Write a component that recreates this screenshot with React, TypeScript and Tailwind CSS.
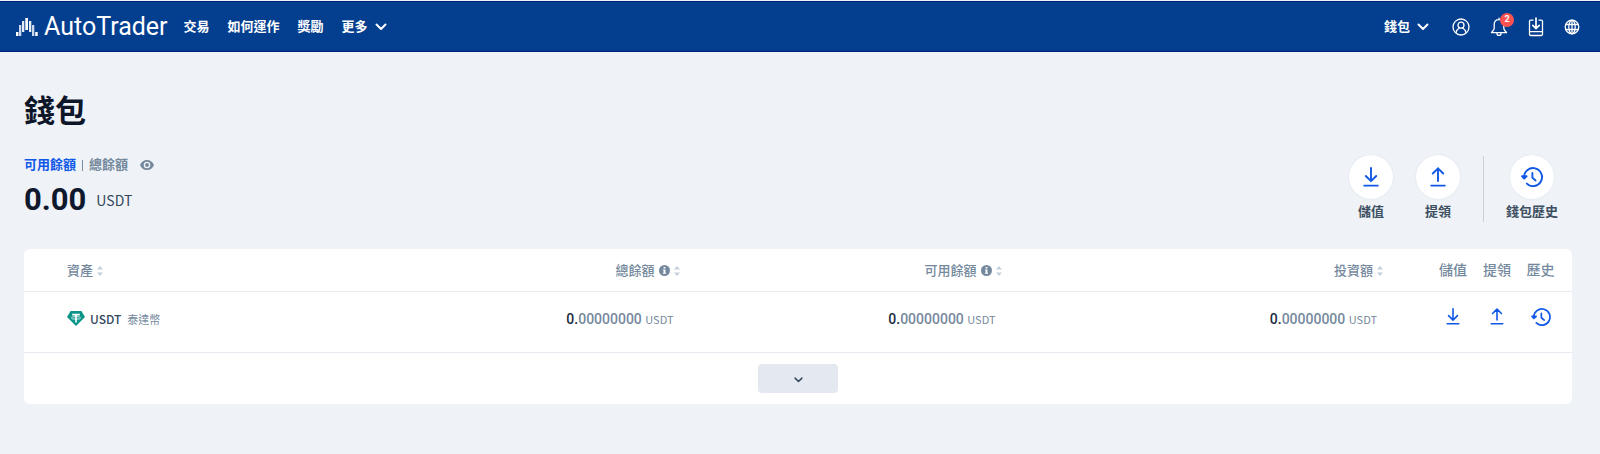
import type { ReactNode } from "react"
import { clsx } from "clsx"

interface IconProps {
  className?: string
}

const navLinks = ["交易", "如何運作", "獎勵"]

const balanceColumns: { id: string; label: string; info: boolean; pad: string; cellPad: string }[] = [
  { id: "total", label: "總餘額", info: true, pad: "pr-6", cellPad: "pr-[30px]" },
  { id: "available", label: "可用餘額", info: true, pad: "pr-6", cellPad: "pr-[30px]" },
  { id: "invested", label: "投資額", info: false, pad: "pr-12", cellPad: "pr-[54px]" },
]

function Logo() {
  return (
    <svg viewBox="0 0 22 20" className="h-5 w-[22px]" fill="#fff">
      <rect x="0" y="15" width="2.500" height="4" />
      <rect x="3" y="8" width="2.300" height="11" opacity=".8" />
      <rect x="6" y="4" width="2.300" height="11" opacity=".9" />
      <rect x="9.300" y="1" width="2.700" height="12" />
      <rect x="13" y="4" width="2.300" height="11" opacity=".9" />
      <rect x="16" y="8" width="2.300" height="11" opacity=".8" />
      <rect x="19.200" y="15" width="2.500" height="4" />
    </svg>
  )
}

function Chevron({ className }: IconProps) {
  return (
    <svg viewBox="0 0 12 8" className={className} fill="none" stroke="currentColor" strokeWidth="2" strokeLinecap="round" strokeLinejoin="round">
      <path d="M1.5 1.5 6 6l4.5-4.5" />
    </svg>
  )
}

function DepositIcon({ className }: IconProps) {
  return (
    <svg viewBox="0 0 16 20" className={className} fill="none" stroke="currentColor" strokeWidth="1.9" strokeLinecap="round" strokeLinejoin="round">
      <path d="M8 1v13M2.800 9 8 14.200 13.200 9M1.200 18.600h13.600" />
    </svg>
  )
}

function WithdrawIcon({ className }: IconProps) {
  return (
    <svg viewBox="0 0 16 20" className={className} fill="none" stroke="currentColor" strokeWidth="1.9" strokeLinecap="round" strokeLinejoin="round">
      <path d="M8 14V1.300M2.800 6.500 8 1.300l5.200 5.200M1.200 18.600h13.600" />
    </svg>
  )
}

function HistoryIcon({ className }: IconProps) {
  return (
    <svg viewBox="0 0 22 20" className={className} fill="none" stroke="currentColor" strokeWidth="1.9" strokeLinecap="round" strokeLinejoin="round">
      <path d="M3 10A9 9 0 1 1 5.800 16.600" />
      <path d="M1 9.200h4.600L3.100 11.600z" fill="currentColor" />
      <path d="M11.400 6v4.800l3.200 2.600" />
    </svg>
  )
}

function UserIcon() {
  return (
    <svg viewBox="0 0 18 18" className="size-[18px]" fill="none" stroke="currentColor" strokeWidth="1.3">
      <circle cx="9" cy="9" r="8" />
      <circle cx="9" cy="7.200" r="3" />
      <path d="M4 14.800c.4-2.700 2-4.100 3.400-4.800M14 14.800c-.4-2.700-2-4.100-3.400-4.800" />
    </svg>
  )
}

function BellIcon() {
  return (
    <svg viewBox="0 0 18 20" className="h-5 w-[18px]" fill="none" stroke="currentColor" strokeWidth="1.3" strokeLinejoin="round" strokeLinecap="round">
      <path d="M9 2.600c-3 0-4.800 2.200-4.800 5v3.600c0 1.800-1.600 3-2.800 4.400h15.200c-1.200-1.400-2.800-2.600-2.800-4.400V7.600c0-2.800-1.800-5-4.800-5zM9 1.200v1.200M7 16.400a2 2 0 0 0 4 0" />
    </svg>
  )
}

function DownloadAppIcon() {
  return (
    <svg viewBox="0 0 16 20" className="h-5 w-4" fill="none" stroke="currentColor" strokeWidth="1.3" strokeLinecap="round" strokeLinejoin="round">
      <path d="M5 3.200H2.800A1.300 1.300 0 0 0 1.500 4.500v12.700a1.300 1.300 0 0 0 1.300 1.300h10.400a1.300 1.300 0 0 0 1.300-1.300V4.500a1.300 1.300 0 0 0-1.300-1.300H11M1.500 14.600h13" />
      <path d="M8 1v10.500M4.800 8.400 8 11.600l3.200-3.200" strokeWidth="1.700" />
    </svg>
  )
}

function GlobeIcon() {
  return (
    <svg viewBox="0 0 16 16" className="size-4" fill="none" stroke="currentColor" strokeWidth="1.300">
      <circle cx="8" cy="8" r="6.800" />
      <ellipse cx="8" cy="8" rx="3.200" ry="6.800" />
      <path d="M8 1.200v13.600M1.800 5.500h12.400M1.800 10.500h12.400" />
    </svg>
  )
}

function EyeIcon() {
  return (
    <svg viewBox="0 0 14 10" className="h-2.5 w-3.5">
      <path fill="currentColor" fillRule="evenodd" d="M7 0c3.200 0 5.900 2 7 5-1.100 3-3.800 5-7 5S1.100 8 0 5c1.100-3 3.800-5 7-5zm0 1.700a3.300 3.300 0 1 0 0 6.600 3.300 3.300 0 0 0 0-6.600zm0 1.400a1.900 1.900 0 1 1 0 3.800 1.900 1.900 0 0 1 0-3.800z" />
    </svg>
  )
}

function InfoIcon() {
  return (
    <svg viewBox="0 0 12 12" className="size-[11px]">
      <circle cx="6" cy="6" r="6" fill="currentColor" />
      <path fill="#fff" d="M5 2.200h2v1.700H5zM4.400 4.900H7v3.500h.7v1.200H4.300V8.400H5V6h-.6z" />
    </svg>
  )
}

function SortIcon() {
  return (
    <svg viewBox="0 0 6 10" className="h-2.5 w-1.5" fill="#c3cfdb">
      <path d="M3 0l3 3.600H0zM3 10l3-3.600H0z" />
    </svg>
  )
}

function TetherIcon() {
  return (
    <svg viewBox="0 0 18 15" className="h-[15px] w-[18px]">
      <path d="M3.600 0h10.800L18 6l-9 9L0 6z" fill="#0c9488" />
      <path d="M5.200 3.600h7.600M9 3.600v8" stroke="#fff" strokeWidth="1.600" />
      <ellipse cx="9" cy="6.900" rx="4.600" ry="1.300" fill="none" stroke="#fff" strokeWidth=".8" />
    </svg>
  )
}

function RoundAction({ label, children }: { label: string; children: ReactNode }) {
  return (
    <button className="flex min-w-11 flex-col items-center gap-[3px] text-[13px] leading-5 font-bold text-[#3d4f61]">
      <span className="flex size-11 items-center justify-center rounded-full bg-white text-[#1158e6] shadow-[0_0_2px_#d5dde8]">
        {children}
      </span>
      {label}
    </button>
  )
}

function SortLabel({ label, info }: { label: string; info?: boolean }) {
  return (
    <button className="inline-flex items-center gap-1 text-[13px] leading-5">
      {label}
      {info && <InfoIcon />}
      <SortIcon />
    </button>
  )
}

export default function App() {
  return (
    <div className="min-h-screen bg-[#eff3f8] pt-px font-['Roboto','Noto_Sans_CJK_TC',sans-serif] text-[#74899d]">
      {/* Top bar */}
      <header className="flex h-[51px] items-center justify-between border-y border-[#001f7c] bg-[#043e8f] pr-5 pl-4 text-[13px] leading-5 font-bold text-white">
        <div className="flex items-center">
          <a href="#" className="flex items-center gap-1.5">
            <Logo />
            <span className="text-[25px] leading-8 font-normal">AutoTrader</span>
          </a>
          <nav className="ml-4 flex items-center gap-[18px]">
            {navLinks.map((link) => (
              <a key={link} href="#">{link}</a>
            ))}
            <button className="flex items-center gap-[7px]">
              更多
              <Chevron className="h-2 w-3" />
            </button>
          </nav>
        </div>
        <div className="flex items-center gap-5">
          <button className="mr-[3px] flex items-center gap-[7px]">
            錢包
            <Chevron className="h-2 w-3" />
          </button>
          <button aria-label="帳戶"><UserIcon /></button>
          <button aria-label="通知" className="relative">
            <BellIcon />
            <span className="absolute -top-1 left-2.5 flex size-3.5 items-center justify-center rounded-full bg-[#fb5151] text-[9px] leading-none">
              2
            </span>
          </button>
          <button aria-label="下載"><DownloadAppIcon /></button>
          <button aria-label="語言"><GlobeIcon /></button>
        </div>
      </header>

      <main className="pt-10 pr-7 pb-12 pl-6">
        <h1 className="text-[31px] leading-10 font-bold text-[#0e1629]">錢包</h1>

        {/* Balance summary */}
        <section className="mt-[23px] flex items-start justify-between">
          <div>
            <div className="flex items-center text-[13px] leading-5 font-bold">
              <button className="text-[#1158e6]">可用餘額</button>
              <span className="mx-[6px] h-[11px] w-px bg-[#7b8fa3]" />
              <button>總餘額</button>
              <button aria-label="顯示餘額" className="ml-3"><EyeIcon /></button>
            </div>
            <p className="mt-[5px] flex items-center gap-2.5 leading-10 text-[#10182e]">
              <span className="font-['Roboto'] text-[31px] font-bold">0.00</span>
              <span className="font-['Noto_Sans_CJK_TC',sans-serif] text-sm text-[#33475b]">USDT</span>
            </p>
          </div>
          <div className="flex items-center pr-[14px]">
            <div className="flex gap-[23px]">
              <RoundAction label="儲值"><DepositIcon className="h-5 w-4" /></RoundAction>
              <RoundAction label="提領"><WithdrawIcon className="h-5 w-4" /></RoundAction>
            </div>
            <span className="mr-[22px] ml-[23px] h-[66px] w-px bg-[#c9d1db]" />
            <RoundAction label="錢包歷史"><HistoryIcon className="h-5 w-[22px]" /></RoundAction>
          </div>
        </section>

        {/* Asset table */}
        <section className="mt-[27px] rounded-md bg-white">
          <table className="w-full table-fixed">
            <colgroup>
              <col className="w-[23.1%]" />
              <col className="w-[20.8%]" />
              <col className="w-[20.8%]" />
              <col />
              <col className="w-11" />
              <col className="w-11" />
              <col className="w-[53px]" />
            </colgroup>
            <thead>
              <tr className="h-[42px] border-b border-[#e6ebf2] text-right">
                <th className="pl-[43px] text-left align-middle font-medium"><SortLabel label="資產" /></th>
                {balanceColumns.map((column) => (
                  <th key={column.id} className={clsx("align-middle font-medium", column.pad)}>
                    <SortLabel label={column.label} info={column.info} />
                  </th>
                ))}
                <th className="text-center text-sm font-medium">儲值</th>
                <th className="text-center text-sm font-medium">提領</th>
                <th className="pr-2.5 text-center text-sm font-medium">歷史</th>
              </tr>
            </thead>
            <tbody>
              <tr className="h-[61px] border-b border-[#e6ebf2]">
                <td className="pb-1.5 pl-[43px]">
                  <div className="flex items-center font-['Noto_Sans_CJK_TC',sans-serif]">
                    <TetherIcon />
                    <span className="ml-[5px] text-xs leading-5 font-medium text-[#33475b]">USDT</span>
                    <span className="ml-1.5 text-[11px] leading-5">泰達幣</span>
                  </div>
                </td>
                {balanceColumns.map((column) => (
                  <td key={column.id} className={clsx("pb-1.5 text-right text-sm font-medium", column.cellPad)}>
                    <span className="text-[#1b2b3f]">0.</span>00000000{" "}
                    <span className="font-['Noto_Sans_CJK_TC',sans-serif] text-[11px] font-normal">USDT</span>
                  </td>
                ))}
                <td className="pb-2.5 text-[#1158e6]">
                  <button aria-label="儲值" className="mx-auto block"><DepositIcon className="h-[17px] w-3.5" /></button>
                </td>
                <td className="pb-2.5 text-[#1158e6]">
                  <button aria-label="提領" className="mx-auto block"><WithdrawIcon className="h-[17px] w-3.5" /></button>
                </td>
                <td className="pr-2.5 pb-2.5 text-[#1158e6]">
                  <button aria-label="歷史" className="mx-auto block"><HistoryIcon className="h-[18px] w-5" /></button>
                </td>
              </tr>
            </tbody>
          </table>
          <div className="flex justify-center py-[11px]">
            <button aria-label="展開" className="flex h-[29px] w-20 items-center justify-center rounded-sm bg-[#e4e9f1] pt-[3px] text-[#33475b]">
              <Chevron className="h-1.5 w-[9px]" />
            </button>
          </div>
        </section>
      </main>
    </div>
  )
}
